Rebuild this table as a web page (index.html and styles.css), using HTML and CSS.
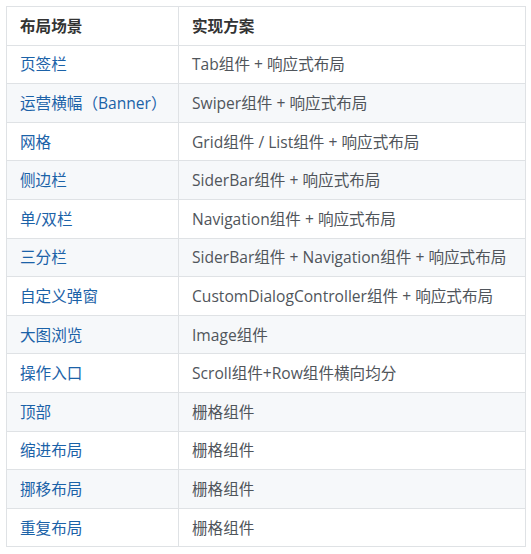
FILE: index.html
```html
<!DOCTYPE html>
<html lang="zh-CN">
<head>
<meta charset="utf-8">
<link rel="stylesheet" href="styles.css">
</head>
<body>
<table class="layout-table">
  <colgroup><col class="col-scene"><col class="col-plan"></colgroup>
  <thead>
    <tr><th>布局场景</th><th>实现方案</th></tr>
  </thead>
  <tbody>
    <tr><td class="link">页签栏</td><td>Tab组件 + 响应式布局</td></tr>
    <tr><td class="link">运营横幅（Banner）</td><td>Swiper组件 + 响应式布局</td></tr>
    <tr><td class="link">网格</td><td>Grid组件 / List组件 + 响应式布局</td></tr>
    <tr><td class="link">侧边栏</td><td>SiderBar组件 + 响应式布局</td></tr>
    <tr><td class="link">单/双栏</td><td>Navigation组件 + 响应式布局</td></tr>
    <tr><td class="link">三分栏</td><td>SiderBar组件 + Navigation组件 + 响应式布局</td></tr>
    <tr><td class="link">自定义弹窗</td><td>CustomDialogController组件 + 响应式布局</td></tr>
    <tr><td class="link">大图浏览</td><td>Image组件</td></tr>
    <tr><td class="link">操作入口</td><td>Scroll组件+Row组件横向均分</td></tr>
    <tr><td class="link">顶部</td><td>栅格组件</td></tr>
    <tr><td class="link">缩进布局</td><td>栅格组件</td></tr>
    <tr><td class="link">挪移布局</td><td>栅格组件</td></tr>
    <tr><td class="link">重复布局</td><td>栅格组件</td></tr>
  </tbody>
</table>
</body>
</html>
```
FILE: styles.css
```css
html, body {
  margin: 0;
  padding: 0;
  background: #ffffff;
}
body {
  padding: 6px 0 0 6px;
  font-family: "Open Sans", "Noto Sans CJK SC", sans-serif;
  font-size: 15.6px;
  color: #50555b;
}
.layout-table {
  border-collapse: collapse;
  table-layout: fixed;
  width: 519px;
}
.col-scene {
  width: 172px;
}
.col-plan {
  width: 347px;
}
.layout-table th,
.layout-table td {
  border: 1px solid #dfe2e5;
  text-align: left;
  padding: 6.8px 13px;
  line-height: 24px;
  white-space: nowrap;
  overflow: visible;
}
.layout-table th {
  font-weight: 700;
  color: #333;
}
.layout-table tbody tr:nth-child(even) {
  background: #f6f8fa;
}
.link {
  color: #1b62a8;
}
```
